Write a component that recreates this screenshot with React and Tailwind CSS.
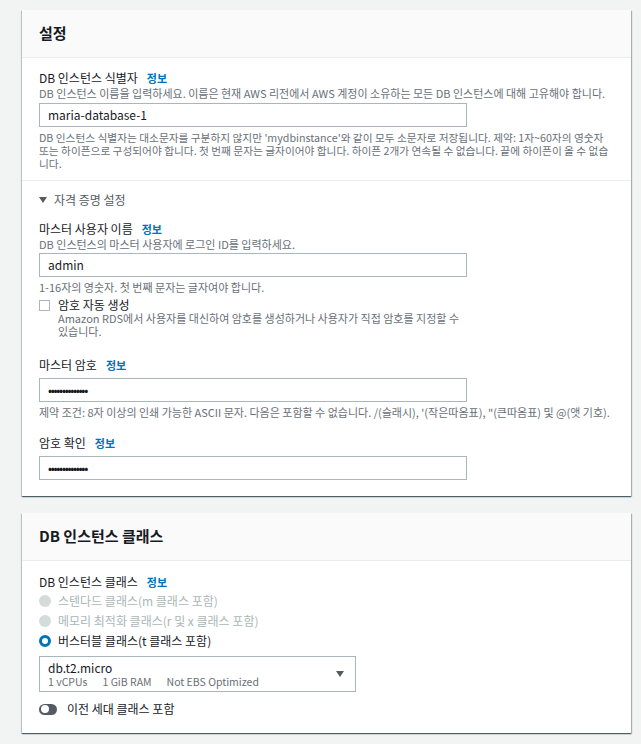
const font = { fontFamily: '"Noto Sans CJK KR", "Noto Sans", sans-serif' };

function Info() {
  return <span className="ml-[9px] text-[11px] font-bold text-[#0073bb]">정보</span>;
}

function Label({ children, className = "" }) {
  return (
    <div className={`flex items-center h-[16px] text-[12px] leading-[16px] text-[#16191f] ${className}`}>
      {children}
      <Info />
    </div>
  );
}

function Input({ value, className = "" }) {
  return (
    <div
      className={`w-[428px] h-[24px] border border-[#aab7b8] bg-white flex items-center pl-[8px] text-[12px] text-[#16191f] ${className}`}
    >
      {value}
    </div>
  );
}

function Card({ title, children, className = "" }) {
  return (
    <div
      className={`ml-[22px] w-[609px] bg-white shadow-[0_1px_1px_0_rgba(0,28,36,0.5),1px_1px_1px_0_rgba(0,28,36,0.25),-1px_1px_1px_0_rgba(0,28,36,0.15)] ${className}`}
    >
      <div className="h-[48px] bg-[#fafafa] border-b border-[#eaeded] flex items-center pl-[17px] text-[15px] font-bold text-[#16191f]">
        {title}
      </div>
      {children}
    </div>
  );
}

function Radio({ checked, disabled, children }) {
  return (
    <div className="flex items-center h-[20px]">
      {checked ? (
        <span className="w-[12px] h-[12px] rounded-full border-[3.5px] border-[#0073bb] bg-white" />
      ) : (
        <span className="w-[12px] h-[12px] rounded-full bg-[#d5dbdb]" />
      )}
      <span className={`ml-[7px] text-[12px] ${disabled ? "text-[#aab7b8]" : "text-[#16191f]"}`}>{children}</span>
    </div>
  );
}

export default function App() {
  const dots = "••••••••••••••";
  return (
    <div className="min-h-[744px] bg-[#f2f3f3] pt-[10px] pb-[9px]" style={font}>
      <Card title="설정">
        <div className="px-[17px] pt-[12px] pb-[10px]">
          <Label>DB 인스턴스 식별자</Label>
          <div className="text-[11px] leading-[14px] text-[#687078]">
            DB 인스턴스 이름을 입력하세요. 이름은 현재 AWS 리전에서 AWS 계정이 소유하는 모든 DB 인스턴스에 대해 고유해야 합니다.
          </div>
          <Input value="maria-database-1" className="mt-[3px]" />
          <div className="mt-[4px] text-[10.7px] leading-[13px] text-[#687078]">
            DB 인스턴스 식별자는 대소문자를 구분하지 않지만 'mydbinstance'와 같이 모두 소문자로 저장됩니다. 제약: 1자~60자의 영숫자 또는 하이픈으로 구성되어야 합니다. 첫 번째 문자는 글자이어야 합니다. 하이픈 2개가 연속될 수 없습니다. 끝에 하이픈이 올 수 없습니다.
          </div>
        </div>
        <div className="border-t border-[#eaeded] px-[17px] pt-[11px] pb-[16px]">
          <div className="flex items-center h-[16px] text-[12px] text-[#545b64]">
            <svg width="8" height="6" viewBox="0 0 8 6" className="mr-[7px]">
              <path d="M0 0 H8 L4 6 Z" fill="#545b64" />
            </svg>
            자격 증명 설정
          </div>
          <Label className="mt-[13px]">마스터 사용자 이름</Label>
          <div className="text-[11px] leading-[14px] text-[#687078]">DB 인스턴스의 마스터 사용자에 로그인 ID를 입력하세요.</div>
          <Input value="admin" className="mt-[2px]" />
          <div className="mt-[4px] text-[11px] leading-[13px] text-[#687078]">1-16자의 영숫자. 첫 번째 문자는 글자여야 합니다.</div>
          <div className="mt-[3px] flex">
            <span className="mt-[3px] w-[11px] h-[11px] border border-[#aab7b8] bg-white shrink-0" />
            <div className="ml-[8px]">
              <div className="h-[15px] leading-[15px] text-[12px] text-[#16191f]">암호 자동 생성</div>
              <div className="w-[402px] text-[11px] leading-[13px] text-[#687078]">
                Amazon RDS에서 사용자를 대신하여 암호를 생성하거나 사용자가 직접 암호를 지정할 수 있습니다.
              </div>
            </div>
          </div>
          <Label className="mt-[19px]">마스터 암호</Label>
          <Input value={dots} className="mt-[5px] text-[9px] tracking-[-1.3px]" />
          <div className="mt-[4px] text-[11px] leading-[13px] text-[#687078]">
            제약 조건: 8자 이상의 인쇄 가능한 ASCII 문자. 다음은 포함할 수 없습니다. /(슬래시), '(작은따옴표), "(큰따옴표) 및 @(앳 기호).
          </div>
          <Label className="mt-[16px]">암호 확인</Label>
          <Input value={dots} className="mt-[5px] text-[9px] tracking-[-1.3px]" />
        </div>
      </Card>

      <Card title="DB 인스턴스 클래스" className="mt-[17px]">
        <div className="px-[17px] pt-[13px] pb-[16px]">
          <Label>DB 인스턴스 클래스</Label>
          <div className="mt-[1px]">
            <Radio disabled>스텐다드 클래스(m 클래스 포함)</Radio>
            <Radio disabled>메모리 최적화 클래스(r 및 x 클래스 포함)</Radio>
            <Radio checked>버스터블 클래스(t 클래스 포함)</Radio>
          </div>
          <div className="mt-[5px] w-[317px] h-[36px] border border-[#aab7b8] flex items-center justify-between pl-[8px] pr-[11px]">
            <div className="pt-[1px]">
              <div className="text-[12px] leading-[14px] text-[#16191f]">db.t2.micro</div>
              <div className="flex text-[10.5px] leading-[14px] text-[#687078]">
                <span>1 vCPUs</span>
                <span className="ml-[15px]">1 GiB RAM</span>
                <span className="ml-[15px]">Not EBS Optimized</span>
              </div>
            </div>
            <svg width="8" height="6" viewBox="0 0 8 6">
              <path d="M0 0 H8 L4 6 Z" fill="#545b64" />
            </svg>
          </div>
          <div className="mt-[9px] flex items-center h-[16px]">
            <span className="w-[18px] h-[11px] rounded-full bg-[#545b64] flex items-center pl-[2px]">
              <span className="w-[8px] h-[8px] rounded-full bg-white" />
            </span>
            <span className="ml-[10px] text-[12px] text-[#16191f]">이전 세대 클래스 포함</span>
          </div>
        </div>
      </Card>
    </div>
  );
}
